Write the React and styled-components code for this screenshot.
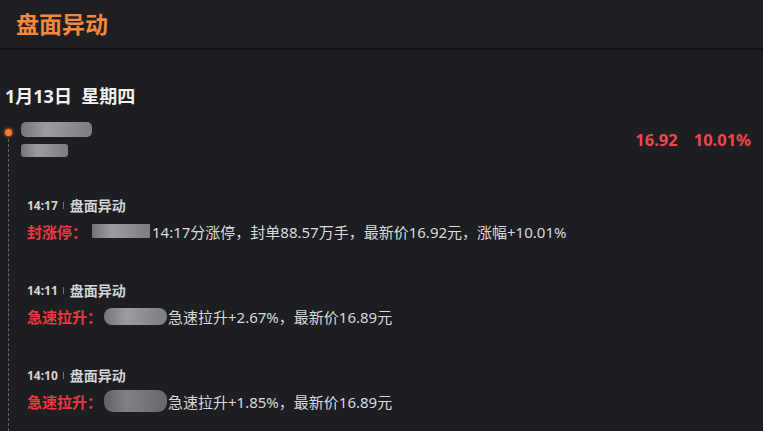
import React from "react";
import styled, { createGlobalStyle } from "styled-components";

const Global = createGlobalStyle`
  html, body { margin: 0; padding: 0; background: #1c1e22; }
  body { font-family: "Noto Sans", "Noto Sans CJK SC", sans-serif; }
`;

const Page = styled.div`
  width: 763px;
  height: 431px;
  overflow: hidden;
  background: #1c1e22;
  display: flex;
  flex-direction: column;
`;

const Header = styled.div`
  height: 48px;
  flex-shrink: 0;
  display: flex;
  align-items: center;
  padding-left: 16px;
  background: #1d1f23;
  border-bottom: 2px solid #121316;
`;

const Title = styled.div`
  color: #f5883a;
  font-family: "Noto Sans CJK SC", sans-serif;
  font-size: 23px;
  font-weight: 700;
  line-height: 28px;
  margin-top: -2px;
`;

const Body = styled.div`
  flex: 1;
  display: flex;
  flex-direction: column;
  padding-top: 35px;
`;

const DateLine = styled.div`
  padding-left: 5px;
  color: #f2f2f2;
  font-size: 18px;
  font-weight: 700;
  line-height: 22px;
  white-space: pre;
`;

const Timeline = styled.div`
  flex: 1;
  display: flex;
  margin-top: 13px;
`;

const Rail = styled.div`
  width: 16px;
  flex-shrink: 0;
  display: flex;
  flex-direction: column;
  align-items: center;
`;

const Dot = styled.div`
  width: 7px;
  height: 7px;
  border-radius: 50%;
  margin-top: 9px;
  background: #ff7a26;
  box-shadow: 0 0 3px 1px rgba(255, 120, 40, 0.55);
`;

const DashLine = styled.div`
  flex: 1;
  margin-top: 3px;
  border-left: 1px dashed #62656b;
`;

const Content = styled.div`
  flex: 1;
  padding-left: 5px;
  padding-right: 12px;
`;

const StockRow = styled.div`
  display: flex;
  justify-content: space-between;
  align-items: flex-start;
  height: 36px;
`;

const NameBlocks = styled.div`
  display: flex;
  flex-direction: column;
  gap: 7px;
  padding-top: 2px;
`;

const Blur = styled.div`
  width: ${(p) => p.$w}px;
  height: ${(p) => p.$h}px;
  border-radius: ${(p) => p.$r || 3}px;
  background: linear-gradient(90deg, #7d7f84 0%, #a8aaae 35%, #9c9ea2 60%, #85878c 100%);
  opacity: ${(p) => p.$o || 0.9};
`;

const InlineBlur = styled(Blur)`
  display: inline-block;
  flex-shrink: 0;
  margin: 0 ${(p) => p.$mr}px 0 ${(p) => p.$ml}px;
`;

const Prices = styled.div`
  display: flex;
  gap: 16px;
  margin-top: 10px;
  color: #f2444e;
  font-size: 16.5px;
  font-weight: 700;
  line-height: 20px;
`;

const Item = styled.div`
  margin-left: 6px;
  margin-top: 41px;
`;

const ItemHead = styled.div`
  display: flex;
  align-items: center;
  height: 16px;
  color: #d3d4d6;
  font-weight: 700;
`;

const Time = styled.span`
  font-size: 12px;
`;

const HeadLabel = styled.span`
  font-size: 14px;
`;

const Sep = styled.span`
  width: 1px;
  height: 7px;
  background: #6d7075;
  margin: 0 6px 0 5px;
`;

const ItemBody = styled.div`
  margin-top: 8px;
  height: 20px;
  display: flex;
  align-items: center;
  color: #d8d9db;
  font-size: 15px;
  white-space: pre;
`;

const Tag = styled.span`
  color: #f0363f;
  font-weight: 700;
  font-size: 15px;
`;

const items = [
  {
    time: "14:17",
    tag: "封涨停：",
    blur: { w: 58, h: 14, r: 1, ml: 5, mr: 2 },
    text: "14:17分涨停，封单88.57万手，最新价16.92元，涨幅+10.01%",
  },
  {
    time: "14:11",
    tag: "急速拉升：",
    blur: { w: 63, h: 17, r: 8, ml: 2, mr: 1 },
    text: "急速拉升+2.67%，最新价16.89元",
  },
  {
    time: "14:10",
    tag: "急速拉升：",
    blur: { w: 63, h: 22, r: 9, ml: 2, mr: 1, o: 0.7 },
    text: "急速拉升+1.85%，最新价16.89元",
  },
];

export default function App() {
  return (
    <Page>
      <Global />
      <Header>
        <Title>盘面异动</Title>
      </Header>
      <Body>
        <DateLine>1月13日  星期四</DateLine>
        <Timeline>
          <Rail>
            <Dot />
            <DashLine />
          </Rail>
          <Content>
            <StockRow>
              <NameBlocks>
                <Blur $w={71} $h={15} $r={5} />
                <Blur $w={47} $h={13} $r={3} />
              </NameBlocks>
              <Prices>
                <span>16.92</span>
                <span>10.01%</span>
              </Prices>
            </StockRow>
            {items.map((it) => (
              <Item key={it.time}>
                <ItemHead>
                  <Time>{it.time}</Time>
                  <Sep />
                  <HeadLabel>盘面异动</HeadLabel>
                </ItemHead>
                <ItemBody>
                  <Tag>{it.tag}</Tag>
                  <InlineBlur
                    $w={it.blur.w}
                    $h={it.blur.h}
                    $r={it.blur.r}
                    $ml={it.blur.ml}
                    $mr={it.blur.mr}
                    $o={it.blur.o}
                  />
                  <span>{it.text}</span>
                </ItemBody>
              </Item>
            ))}
          </Content>
        </Timeline>
      </Body>
    </Page>
  );
}
